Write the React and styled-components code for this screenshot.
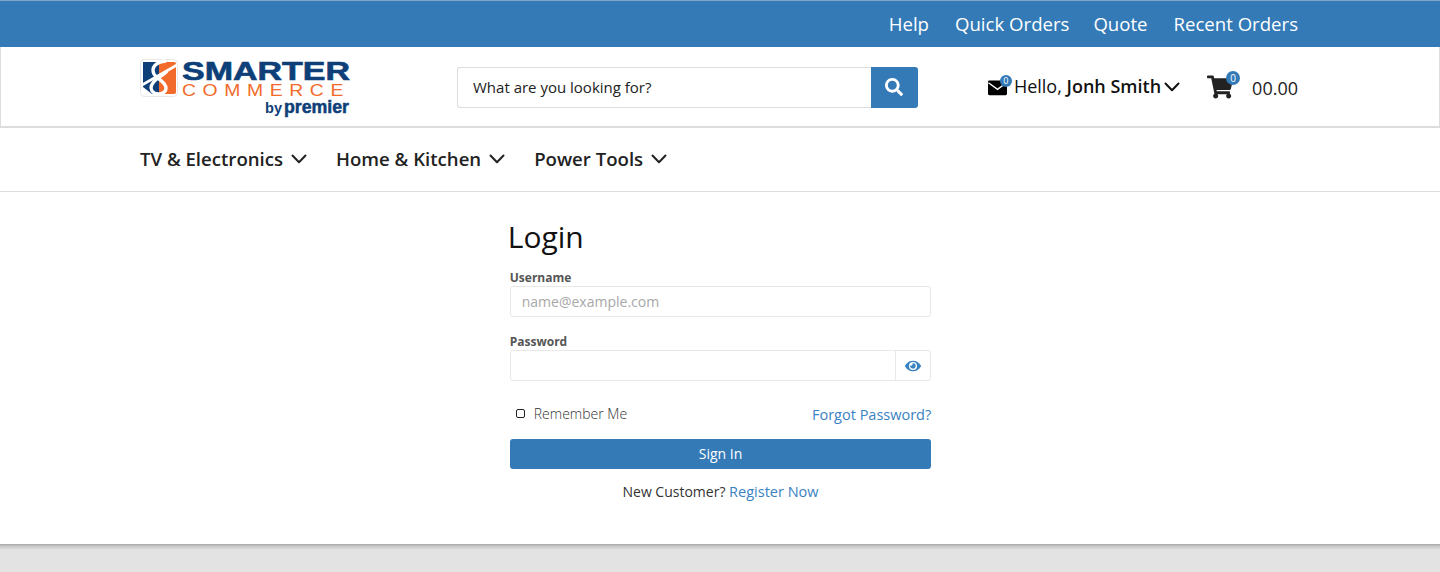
import React from "react";
import styled, { createGlobalStyle } from "styled-components";
import { FaSearch, FaShoppingCart, FaEye } from "react-icons/fa";

const Global = createGlobalStyle`
  html, body { margin: 0; padding: 0; background: #e3e3e3; }
  * { box-sizing: border-box; }
  body { font-family: "Open Sans", "Liberation Sans", sans-serif; }
`;

const Shell = styled.div`
  height: 572px;
  display: flex;
  flex-direction: column;
  background: #e3e3e3;
`;
const Page = styled.div`
  height: 544px;
  flex: none;
  background: #fff;
  display: flex;
  flex-direction: column;
`;
const PageEnd = styled.div`
  flex: 1;
  background: linear-gradient(#a6a6a6, #c4c4c4 2px, #e3e3e3 6px);
`;
const TopBar = styled.div`
  height: 47px;
  background: #337ab7;
  border-top: 1px solid #7fa6c9;
  display: flex;
  justify-content: flex-end;
  align-items: center;
  padding: 0 142px 0 0;
`;
const TopLink = styled.a`
  color: #fff;
  font-size: 18.6px;
  font-weight: 500;
  line-height: 24px;
  margin-left: ${(p) => p.$gap}px;
`;
const Header = styled.div`
  height: 81px;
  border: 1px solid #ddd;
  border-top: 0;
  border-bottom: 2px solid #ddd;
  display: flex;
  align-items: center;
  padding: 0 141px 0 139px;
`;
const Logo = styled.svg`
  width: 212px;
  height: 62px;
  flex: none;
  margin-top: 1px;
`;
const Search = styled.div`
  display: flex;
  width: 461px;
  height: 41px;
  margin: 1px 0 0 105px;
`;
const SearchInput = styled.div`
  flex: 1;
  border: 1px solid #ddd;
  border-right: 0;
  border-radius: 3px 0 0 3px;
  padding-left: 15px;
  font-size: 15px;
  line-height: 38px;
  color: #222;
`;
const SearchButton = styled.div`
  width: 47px;
  background: #337ab7;
  border-radius: 0 3px 3px 0;
  color: #fff;
  display: flex;
  align-items: center;
  justify-content: center;
  font-size: 18px;
`;
const Account = styled.div`
  display: flex;
  align-items: center;
  margin-left: 70px;
  font-size: 18px;
  color: #111;
  height: 41px;
`;
const IconWrap = styled.span`
  position: relative;
  display: inline-flex;
  color: ${(p) => p.$color};
  margin-top: ${(p) => p.$drop || 0}px;
`;
const Badge = styled.span`
  position: absolute;
  top: ${(p) => p.$top}px;
  right: ${(p) => p.$right}px;
  width: ${(p) => p.$size}px;
  height: ${(p) => p.$size}px;
  border-radius: 50%;
  background: #337ab7;
  color: #fff;
  font-size: ${(p) => p.$font}px;
  line-height: ${(p) => p.$size}px;
  text-align: center;
`;
const Hello = styled.span`
  margin: 0 0 2px 7px;
  line-height: 24px;
  white-space: nowrap;
`;
const Strong = styled.b`
  font-weight: 600;
`;
const Caret = styled.span`
  margin-left: 3px;
  display: inline-flex;
`;
const Cart = styled.div`
  display: flex;
  align-items: center;
  margin-left: 27px;
  height: 41px;
`;
const Amount = styled.span`
  margin: 2px 0 0 19px;
  font-size: 18px;
  color: #222;
`;
const Nav = styled.div`
  height: 64px;
  border-bottom: 1px solid #ddd;
  display: flex;
  align-items: center;
  padding: 0 0 2px 140px;
  gap: 29px;
`;
const NavItem = styled.a`
  display: flex;
  align-items: center;
  gap: 8px;
  font-size: 18.6px;
  font-weight: 600;
  color: #222;
`;
const Main = styled.div`
  flex: 1;
  display: flex;
  justify-content: center;
`;
const Form = styled.div`
  width: 421.5px;
  margin-left: 1px;
  display: flex;
  flex-direction: column;
`;
const Title = styled.h1`
  margin: 22px 0 0 -2px;
  font-size: 30px;
  font-weight: 400;
  line-height: 46px;
  color: #111;
`;
const Label = styled.label`
  display: block;
  font-size: 12px;
  font-weight: 700;
  color: #555;
  line-height: 16px;
  margin-top: ${(p) => p.$top}px;
`;
const Field = styled.div`
  display: flex;
  height: 31px;
  border: 1px solid #e8e8e8;
  border-radius: 3px;
  font-size: 14px;
  line-height: 29px;
  color: #a8a8a8;
  padding-left: ${(p) => (p.$pad ? 11 : 0)}px;
`;
const FieldFill = styled.div`
  flex: 1;
`;
const Addon = styled.div`
  width: 35px;
  border-left: 1px solid #e8e8e8;
  color: #3a82c2;
  display: flex;
  align-items: center;
  justify-content: center;
  font-size: 16px;
`;
const Row = styled.div`
  display: flex;
  justify-content: space-between;
  align-items: center;
  height: 20px;
  margin-top: 23px;
`;
const Remember = styled.div`
  display: flex;
  align-items: center;
  padding-left: 6px;
  font-size: 14px;
  font-weight: 300;
  color: #333;
  margin-top: -1px;
`;
const Box = styled.span`
  width: 9px;
  height: 9px;
  border: 1px solid #222;
  border-radius: 2px;
  margin-right: 9px;
`;
const Link = styled.a`
  color: #3a82c2;
  font-size: 14.5px;
  font-weight: 500;
`;
const Submit = styled.div`
  height: 29.5px;
  margin-top: 15px;
  background: #337ab7;
  border-radius: 3px;
  color: #fff;
  font-size: 14px;
  font-weight: 400;
  line-height: 30px;
  text-align: center;
`;
const Register = styled.div`
  margin-top: 13px;
  text-align: center;
  font-size: 14px;
  line-height: 20px;
  color: #333;
`;

const Chevron = () => (
  <svg width={16} height={10} viewBox="0 0 16 10" fill="none" stroke="currentColor" strokeWidth="2" strokeLinecap="round" strokeLinejoin="round">
    <path d="M1.5 1.5 8 8.2l6.5-6.7" />
  </svg>
);

const Envelope = () => (
  <svg width={19} height={16} viewBox="0 0 20 16">
    <rect width="20" height="15.5" rx="1.5" fill="#000" />
    <path d="M0.5 2.5 10 9.5l9.5-7" fill="none" stroke="#fff" strokeWidth="1.5" />
  </svg>
);

const NAVY = "#0f3f79";
const ORANGE = "#f26b2a";

const LogoMark = () => (
  <Logo viewBox="0 0 212 62" role="img" aria-label="Smarter Commerce by Premier">
    <rect x="0.5" y="3.5" width="37" height="37" rx="4" fill="#fff" stroke="#e8e8e8" />
    <path d="M3 6h16v32H3z" fill={NAVY} />
    <path d="M19 6h15a2 2 0 0 1 2 2v28a2 2 0 0 1-2 2H19z" fill={ORANGE} />
    <path d="M3 31v7h9z" fill="#fff" />
    <path d="M37 9 2 29" stroke="#fff" strokeWidth="2.6" fill="none" />
    <path d="M26 5C15 6 11 12 14 18c3 5 12 8 12 14 0 6-10 8-14 3-3-5 2-10 6-13 4-3 8-5 9-7" stroke="#fff" strokeWidth="3.4" fill="none" />
    <text x="42" y="24" fontFamily="Liberation Sans, sans-serif" fontWeight="700" fontSize="25" stroke={NAVY} strokeWidth="0.6" fill={NAVY} textLength="168" lengthAdjust="spacingAndGlyphs">SMARTER</text>
    <text x="42" y="40" fontFamily="Liberation Sans, sans-serif" fontSize="16" letterSpacing="5.5" fill={ORANGE} textLength="168" lengthAdjust="spacingAndGlyphs">COMMERCE</text>
    <text x="125" y="57" fontFamily="Liberation Sans, sans-serif" fontWeight="700" fontSize="15" fill={NAVY} textLength="17" lengthAdjust="spacingAndGlyphs">by</text>
    <text x="144" y="57" fontFamily="Liberation Sans, sans-serif" fontWeight="700" fontSize="18" stroke={NAVY} strokeWidth="0.5" fill={NAVY} textLength="65" lengthAdjust="spacingAndGlyphs">premier</text>
  </Logo>
);

export default function App() {
  return (
    <Shell>
      <Global />
      <Page>
        <TopBar>
          <TopLink>Help</TopLink>
          <TopLink $gap={26}>Quick Orders</TopLink>
          <TopLink $gap={24}>Quote</TopLink>
          <TopLink $gap={26}>Recent Orders</TopLink>
        </TopBar>
        <Header>
          <LogoMark />
          <Search>
            <SearchInput>What are you looking for?</SearchInput>
            <SearchButton><FaSearch /></SearchButton>
          </Search>
          <Account>
            <IconWrap $color="#000" $drop={2}>
              <Envelope />
              <Badge $top={-5} $right={-5} $size={12} $font={9}>0</Badge>
            </IconWrap>
            <Hello>Hello, <Strong>Jonh Smith</Strong></Hello>
            <Caret><Chevron /></Caret>
          </Account>
          <Cart>
            <IconWrap $color="#222">
              <FaShoppingCart size={26} />
              <Badge $top={-3} $right={-7} $size={14} $font={10}>0</Badge>
            </IconWrap>
            <Amount>00.00</Amount>
          </Cart>
        </Header>
        <Nav>
          <NavItem>TV &amp; Electronics <Chevron /></NavItem>
          <NavItem>Home &amp; Kitchen <Chevron /></NavItem>
          <NavItem>Power Tools <Chevron /></NavItem>
        </Nav>
        <Main>
          <Form>
            <Title>Login</Title>
            <Label $top={10}>Username</Label>
            <Field $pad>name@example.com</Field>
            <Label $top={17}>Password</Label>
            <Field>
              <FieldFill />
              <Addon><FaEye /></Addon>
            </Field>
            <Row>
              <Remember><Box />Remember Me</Remember>
              <Link>Forgot Password?</Link>
            </Row>
            <Submit>Sign In</Submit>
            <Register>New Customer? <Link>Register Now</Link></Register>
          </Form>
        </Main>
      </Page>
      <PageEnd />
    </Shell>
  );
}
